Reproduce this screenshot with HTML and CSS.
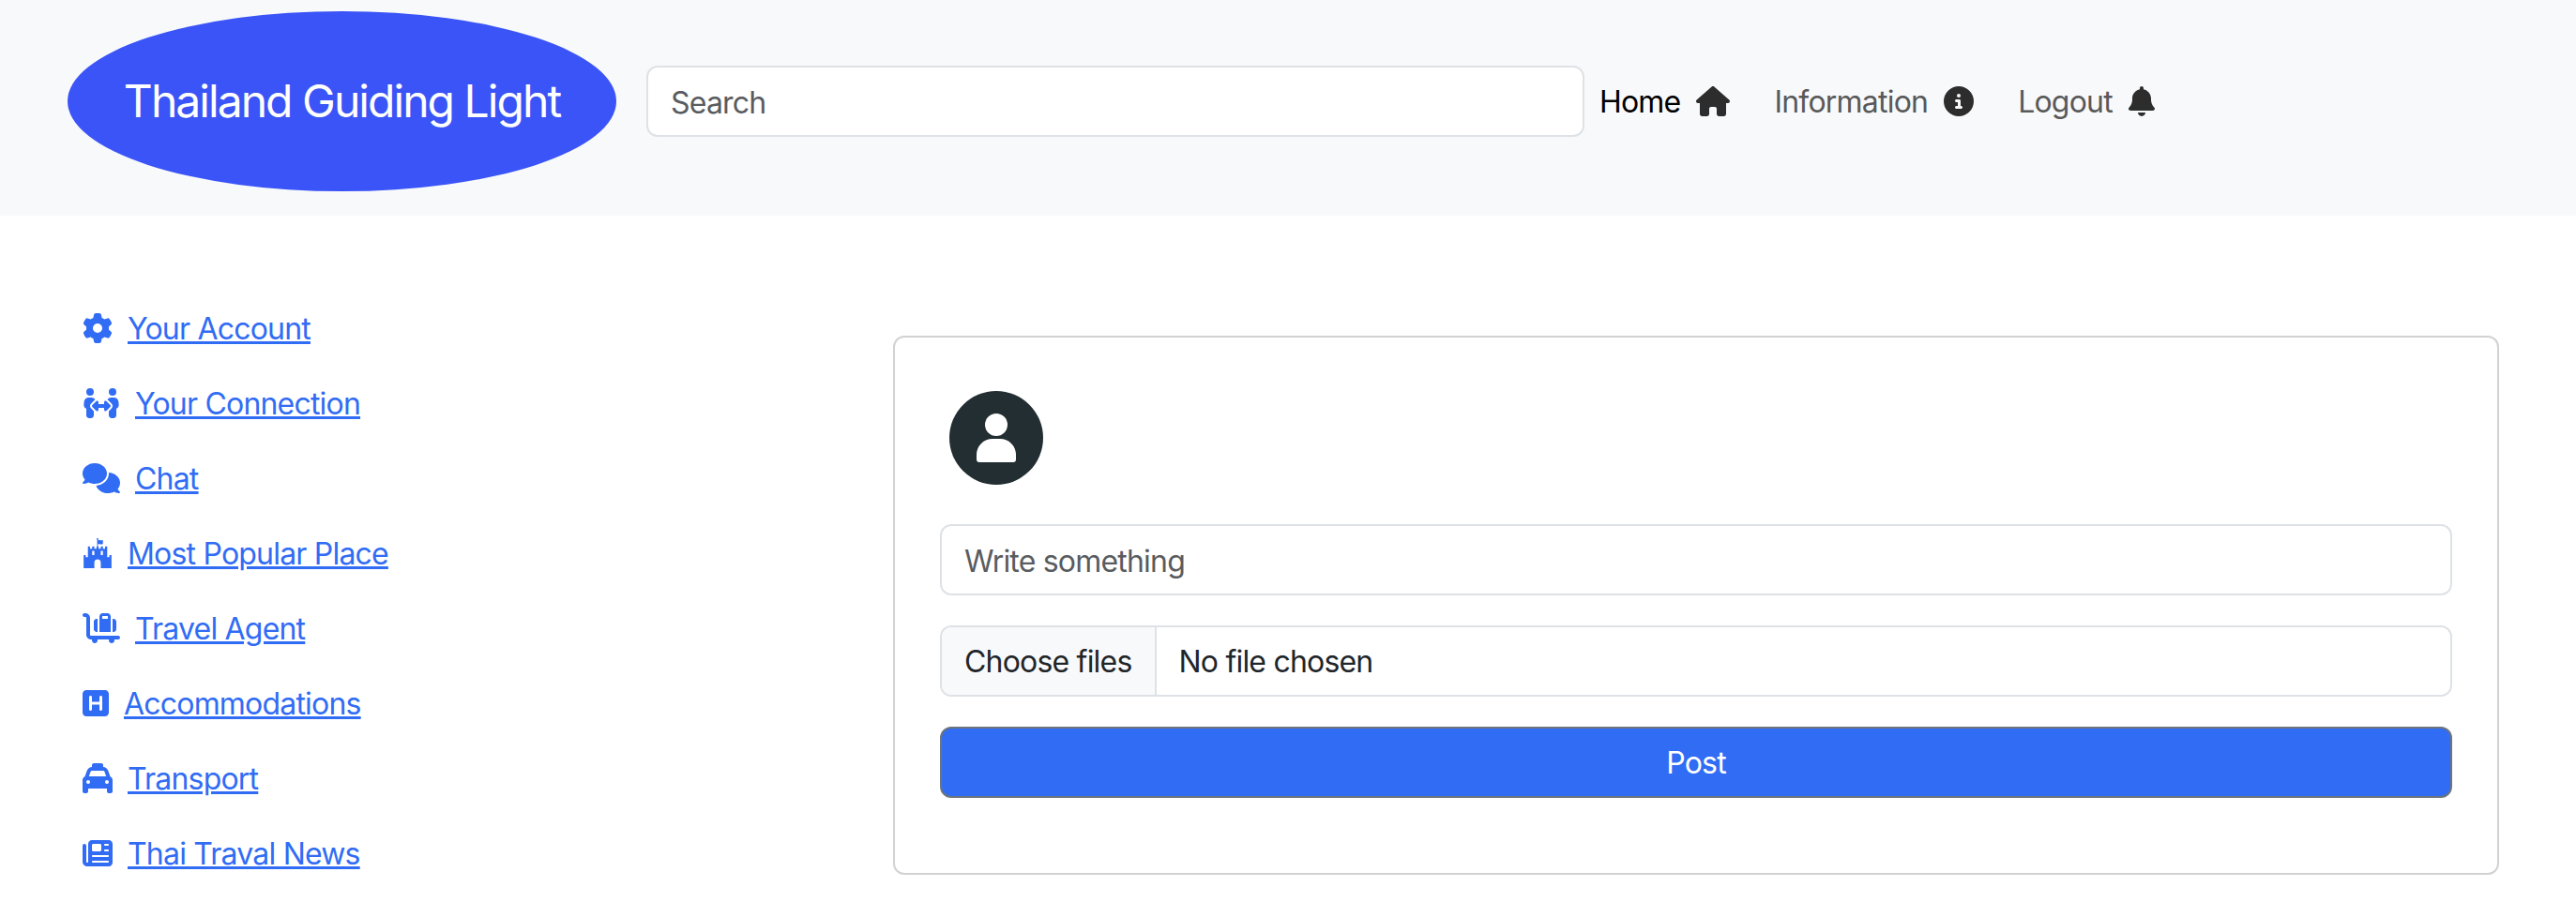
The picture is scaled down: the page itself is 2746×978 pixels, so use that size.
FILE: index.html
```html
<!DOCTYPE html>
<html lang="en">
<head>
<meta charset="utf-8">
<title>Thailand Guiding Light</title>
<link rel="stylesheet" href="styles.css">
</head>
<body>
<header class="navbar">
  <a class="brand" href="#">Thailand Guiding Light</a>
  <input class="field search" type="text" placeholder="Search">
  <nav class="nav-links">
    <a class="nav-link active" href="#"><span class="label">Home</span> <svg class="icon" viewBox="0 0 576 512"><path d="M575.8 255.5c0 18-15 32.1-32 32.1h-32l.7 160.2c0 2.7-.2 5.4-.5 8.1V472c0 22.1-17.9 40-40 40H456c-1.1 0-2.2 0-3.3-.1c-1.4 .1-2.8 .1-4.2 .1H416 392c-22.1 0-40-17.9-40-40V448 384c0-17.7-14.3-32-32-32H256c-17.7 0-32 14.3-32 32v64 24c0 22.1-17.9 40-40 40H160 128.1c-1.5 0-3-.1-4.5-.2c-1.2 .1-2.4 .2-3.6 .2H104c-22.1 0-40-17.9-40-40V360c0-.9 0-1.9 .1-2.8V287.6H32c-18 0-32-14-32-32.1c0-9 3-17 10-24L266.4 8c7-7 15-8 22-8s15 2 21 7L564.8 231.5c8 7 12 15 11 24z"/></svg></a>
    <a class="nav-link" href="#"><span class="label">Information</span> <svg class="icon" viewBox="0 0 512 512"><path d="M256 512A256 256 0 1 0 256 0a256 256 0 1 0 0 512zM216 336h24V272H216c-13.3 0-24-10.7-24-24s10.7-24 24-24h48c13.3 0 24 10.7 24 24v88h8c13.3 0 24 10.7 24 24s-10.7 24-24 24H216c-13.3 0-24-10.7-24-24s10.7-24 24-24zm40-208a32 32 0 1 1 0 64 32 32 0 1 1 0-64z"/></svg></a>
    <a class="nav-link" href="#"><span class="label">Logout</span> <svg class="icon" viewBox="0 0 448 512"><path d="M224 0c-17.7 0-32 14.3-32 32V51.2C119 66 64 130.6 64 208v18.8c0 47-17.3 92.4-48.5 127.6l-7.4 8.3c-8.4 9.4-10.4 22.9-5.3 34.4S19.4 416 32 416H416c12.6 0 24-7.4 29.2-18.9s3.1-25-5.3-34.4l-7.4-8.3C401.3 319.2 384 273.9 384 226.8V208c0-77.4-55-142-128-156.8V32c0-17.7-14.3-32-32-32zm45.3 493.3c12-12 18.7-28.3 18.7-45.3H224 160c0 17 6.7 33.3 18.7 45.3s28.3 18.7 45.3 18.7s33.3-6.7 45.3-18.7z"/></svg></a>
  </nav>
</header>
<main class="layout">
  <ul class="side">
    <li class="side-item"><svg class="icon" viewBox="0 0 512 512"><path d="M495.9 166.6c3.2 8.7 .5 18.4-6.4 24.6l-43.3 39.4c1.1 8.3 1.7 16.8 1.7 25.4s-.6 17.1-1.7 25.4l43.3 39.4c6.9 6.2 9.6 15.9 6.4 24.6c-4.4 11.9-9.7 23.3-15.8 34.3l-4.7 8.1c-6.6 11-14 21.4-22.1 31.2c-5.9 7.2-15.7 9.6-24.5 6.8l-55.7-17.7c-13.4 10.3-28.2 18.9-44 25.4l-12.5 57.1c-2 9.1-9 16.3-18.2 17.8c-13.8 2.3-28 3.5-42.5 3.5s-28.7-1.2-42.5-3.5c-9.2-1.5-16.2-8.7-18.2-17.8l-12.5-57.1c-15.8-6.5-30.6-15.1-44-25.4L83.1 425.9c-8.8 2.8-18.6 .3-24.5-6.8c-8.1-9.8-15.5-20.2-22.1-31.2l-4.7-8.1c-6.1-11-11.4-22.4-15.8-34.3c-3.2-8.7-.5-18.4 6.4-24.6l43.3-39.4C64.6 273.1 64 264.6 64 256s.6-17.1 1.7-25.4L22.4 191.2c-6.9-6.2-9.6-15.9-6.4-24.6c4.4-11.9 9.7-23.3 15.8-34.3l4.7-8.1c6.6-11 14-21.4 22.1-31.2c5.9-7.2 15.7-9.6 24.5-6.8l55.7 17.7c13.4-10.3 28.2-18.9 44-25.4l12.5-57.1c2-9.1 9-16.3 18.2-17.8C227.3 1.2 241.5 0 256 0s28.7 1.2 42.5 3.5c9.2 1.5 16.2 8.7 18.2 17.8l12.5 57.1c15.8 6.5 30.6 15.1 44 25.4l55.7-17.7c8.8-2.8 18.6-.3 24.5 6.8c8.1 9.8 15.5 20.2 22.1 31.2l4.7 8.1c6.1 11 11.4 22.4 15.8 34.3zM256 336a80 80 0 1 0 0-160 80 80 0 1 0 0 160z"/></svg><a href="#">Your Account</a></li>
    <li class="side-item"><svg class="icon" viewBox="0 0 640 512"><path d="M64 64a64 64 0 1 1 128 0A64 64 0 1 1 64 64zM25.9 233.4C29.3 191.9 64 160 105.6 160h44.8c27 0 51 13.4 65.5 34.1c-2.7 1.9-5.2 4-7.5 6.3l-64 64c-21.9 21.9-21.9 57.3 0 79.2L192 391.2V464c0 26.5-21.5 48-48 48H112c-26.5 0-48-21.5-48-48V348.3c-26.5-9.5-44.7-35.8-42.2-65.6l4.1-49.3zM448 64a64 64 0 1 1 128 0A64 64 0 1 1 448 64zM431.6 200.4c-2.3-2.3-4.9-4.4-7.5-6.3c14.5-20.7 38.6-34.1 65.5-34.1h44.8c41.6 0 76.3 31.9 79.7 73.4l4.1 49.3c2.5 29.8-15.7 56.1-42.2 65.6V464c0 26.5-21.5 48-48 48H496c-26.5 0-48-21.5-48-48V391.2l47.6-47.6c21.9-21.9 21.9-57.3 0-79.2l-64-64zM272 240v32h96V240c0-9.7 5.8-18.5 14.8-22.2s19.3-1.7 26.2 5.2l64 64c9.4 9.4 9.4 24.6 0 33.9l-64 64c-6.9 6.9-17.2 8.9-26.2 5.2s-14.8-12.5-14.8-22.2V336H272v32c0 9.7-5.8 18.5-14.8 22.2s-19.3 1.7-26.2-5.2l-64-64c-9.4-9.4-9.4-24.6 0-33.9l64-64c6.9-6.9 17.2-8.9 26.2-5.2s14.8 12.5 14.8 22.2z"/></svg><a href="#">Your Connection</a></li>
    <li class="side-item"><svg class="icon" viewBox="0 0 640 512"><path d="M208 352c114.9 0 208-78.8 208-176S322.9 0 208 0S0 78.8 0 176c0 38.6 14.7 74.3 39.6 103.4c-3.5 9.4-8.7 17.7-14.2 24.7c-4.8 6.2-9.7 11-13.3 14.3c-1.8 1.6-3.3 2.9-4.3 3.7c-.5 .4-.9 .7-1.1 .8l-.2 .2 0 0 0 0C1 327.2-1.4 334.4 .8 340.9S9.1 352 16 352c21.8 0 43.8-5.6 62.1-12.5c9.2-3.5 17.8-7.4 25.3-11.4C134.1 343.3 169.8 352 208 352zM448 176c0 112.3-99.1 196.9-216.5 207C255.8 457.4 336.4 512 432 512c38.2 0 73.9-8.7 104.7-23.9c7.5 4 16 7.9 25.2 11.4c18.3 6.9 40.3 12.5 62.1 12.5c6.9 0 13.1-4.5 15.2-11.1c2.1-6.6-.2-13.8-5.8-17.9l0 0 0 0-.2-.2c-.2-.2-.6-.4-1.1-.8c-1-.8-2.5-2-4.3-3.7c-3.6-3.3-8.5-8.1-13.3-14.3c-5.5-7-10.7-15.4-14.2-24.7c24.9-29 39.6-64.7 39.6-103.4c0-92.8-84.9-168.9-192.6-175.5c.4 5.1 .6 10.3 .6 15.5z"/></svg><a href="#">Chat</a></li>
    <li class="side-item"><svg class="icon" viewBox="0 0 512 512"><path d="M489.2 287.9h-27.4c-2.6 0-4.6 2-4.6 4.6v32h-36.6V146.2c0-2.6-2-4.6-4.6-4.6h-27.4c-2.6 0-4.6 2-4.6 4.6v32h-36.6v-32c0-2.6-2-4.6-4.6-4.6h-27.4c-2.6 0-4.6 2-4.6 4.6v32h-36.6v-32c0-6-8-4.6-11.7-4.6v-38c8.3-2 17.1-3.4 25.7-3.4 10.9 0 20.9 4.3 31.4 4.3 4.6 0 27.7-1.1 27.7-8v-60c0-2.6-2-4.6-4.6-4.6-5.1 0-15.1 4.3-24 4.3-9.7 0-20.9-4.3-32.6-4.3-8 0-16 1.1-23.7 2.9v-4.9c5.4-2.6 9.1-8.3 9.1-14.3 0-20.7-31.4-20.8-31.4 0 0 6 3.7 11.7 9.1 14.3v111.7c-3.7 0-11.7-1.4-11.7 4.6v32h-36.6v-32c0-2.6-2-4.6-4.6-4.6h-27.4c-2.6 0-4.6 2-4.6 4.6v32H128v-32c0-2.6-2-4.6-4.6-4.6H96c-2.6 0-4.6 2-4.6 4.6v178.3H54.8v-32c0-2.6-2-4.6-4.6-4.6H22.8c-2.6 0-4.6 2-4.6 4.6V512h182.9v-96c0-72.6 109.7-72.6 109.7 0v96h182.9V292.5c.1-2.6-1.9-4.6-4.5-4.6zm-288.1-4.5c0 2.6-2 4.6-4.6 4.6h-27.4c-2.6 0-4.6-2-4.6-4.6v-64c0-2.6 2-4.6 4.6-4.6h27.4c2.6 0 4.6 2 4.6 4.6v64zm146.4 0c0 2.6-2 4.6-4.6 4.6h-27.4c-2.6 0-4.6-2-4.6-4.6v-64c0-2.6 2-4.6 4.6-4.6h27.4c2.6 0 4.6 2 4.6 4.6v64z"/></svg><a href="#">Most Popular Place</a></li>
    <li class="side-item"><svg class="icon" viewBox="0 0 640 512"><path d="M0 32C0 14.3 14.3 0 32 0H48c44.2 0 80 35.8 80 80V368c0 8.8 7.2 16 16 16H608c17.7 0 32 14.3 32 32s-14.3 32-32 32H541.3c1.8 5 2.7 10.4 2.7 16c0 26.5-21.5 48-48 48s-48-21.5-48-48c0-5.6 1-11 2.7-16H253.3c1.8 5 2.7 10.4 2.7 16c0 26.5-21.5 48-48 48s-48-21.5-48-48c0-5.6 1-11 2.7-16H144c-44.2 0-80-35.8-80-80V80c0-8.8-7.2-16-16-16H32C14.3 64 0 49.7 0 32zM432 96V56c0-4.4-3.6-8-8-8H344c-4.4 0-8 3.6-8 8V96h96zM288 96V56c0-30.9 25.1-56 56-56h80c30.9 0 56 25.1 56 56V96 320H288V96zM512 320V96h16c26.5 0 48 21.5 48 48V272c0 26.5-21.5 48-48 48H512zM240 96h16V320H240c-26.5 0-48-21.5-48-48V144c0-26.5 21.5-48 48-48z"/></svg><a href="#">Travel Agent</a></li>
    <li class="side-item"><svg class="icon" viewBox="0 0 448 512"><path d="M64 32C28.7 32 0 60.7 0 96V416c0 35.3 28.7 64 64 64H384c35.3 0 64-28.7 64-64V96c0-35.3-28.7-64-64-64H64zM336 152V256 360c0 13.3-10.7 24-24 24s-24-10.7-24-24V280H160l0 80c0 13.3-10.7 24-24 24s-24-10.7-24-24l0-208c0-13.3 10.7-24 24-24s24 10.7 24 24v80H288V152c0-13.3 10.7-24 24-24s24 10.7 24 24z"/></svg><a href="#">Accommodations</a></li>
    <li class="side-item"><svg class="icon" viewBox="0 0 512 512"><path d="M192 0c-17.7 0-32 14.3-32 32V64c0 .1 0 .1 0 .2c-38.6 2.2-72.3 27.3-85.2 64.1L39.6 228.8C16.4 238.4 0 261.3 0 288V432v48c0 17.7 14.3 32 32 32H64c17.7 0 32-14.3 32-32V432H416v48c0 17.7 14.3 32 32 32h32c17.7 0 32-14.3 32-32V432 288c0-26.7-16.4-49.6-39.6-59.2L437.2 128.3c-12.9-36.8-46.6-61.9-85.2-64.1c0-.1 0-.1 0-.2V32c0-17.7-14.3-32-32-32H192zM165.4 128H346.6c13.6 0 25.7 8.6 30.2 21.4L402.9 224H109.1l26.1-74.6c4.5-12.8 16.6-21.4 30.2-21.4zM96 288a32 32 0 1 1 0 64 32 32 0 1 1 0-64zm288 32a32 32 0 1 1 64 0 32 32 0 1 1 -64 0z"/></svg><a href="#">Transport</a></li>
    <li class="side-item"><svg class="icon" viewBox="0 0 512 512"><path d="M96 96c0-35.3 28.7-64 64-64H448c35.3 0 64 28.7 64 64V416c0 35.3-28.7 64-64 64H80c-44.2 0-80-35.8-80-80V128c0-17.7 14.3-32 32-32s32 14.3 32 32V400c0 8.8 7.2 16 16 16s16-7.2 16-16V96zm64 24v80c0 13.3 10.7 24 24 24H296c13.3 0 24-10.7 24-24V120c0-13.3-10.7-24-24-24H184c-13.3 0-24 10.7-24 24zm208-8c0 8.8 7.2 16 16 16h48c8.8 0 16-7.2 16-16s-7.2-16-16-16H384c-8.8 0-16 7.2-16 16zm0 96c0 8.8 7.2 16 16 16h48c8.8 0 16-7.2 16-16s-7.2-16-16-16H384c-8.8 0-16 7.2-16 16zM160 304c0 8.8 7.2 16 16 16H432c8.8 0 16-7.2 16-16s-7.2-16-16-16H176c-8.8 0-16 7.2-16 16zm0 96c0 8.8 7.2 16 16 16H432c8.8 0 16-7.2 16-16s-7.2-16-16-16H176c-8.8 0-16 7.2-16 16z"/></svg><a href="#">Thai Traval News</a></li>
  </ul>
  <section class="card">
    <div class="avatar"><svg class="avatar-icon" viewBox="0 0 42 52"><circle cx="21" cy="12" r="12"/><path d="M3 52a3 3 0 0 1-3-3v-5a17 17 0 0 1 17-17h8a17 17 0 0 1 17 17v5a3 3 0 0 1-3 3z"/></svg></div>
    <form class="post-form">
      <input class="field" type="text" placeholder="Write something">
      <div class="file-field"><span class="file-btn">Choose files</span><span class="file-name">No file chosen</span></div>
      <button class="post-btn" type="button">Post</button>
    </form>
  </section>
</main>
</body>
</html>
```
FILE: styles.css
```css
* { box-sizing: border-box; }
html, body { margin: 0; }
body {
  font-family: Inter, "Liberation Sans", sans-serif;
  font-size: 32px;
  line-height: 48px;
  letter-spacing: -0.8px;
  color: #212529;
  background: #fff;
}
.navbar {
  display: flex;
  align-items: center;
  height: 230px;
  padding: 12px 0 26px 72px;
  background: #f8f9fb;
}
.brand {
  display: flex;
  align-items: center;
  justify-content: center;
  flex: none;
  width: 585px;
  height: 192px;
  margin-right: 32px;
  border-radius: 50%;
  background: #3a54f7;
  color: #fff;
  font-size: 48px;
  letter-spacing: -1.95px;
  text-decoration: none;
}
.field {
  display: block;
  width: 100%;
  height: 76px;
  padding: 2px 24px 0;
  border: 2px solid #dee2e6;
  border-radius: 12px;
  background: #fff;
  color: #212529;
  font: inherit;
  letter-spacing: inherit;
  outline: none;
}
.field::placeholder { color: #595c5f; opacity: 1; }
.search { width: 1000px; flex: none; margin-right: 16px; }
.nav-links { display: flex; gap: 47px; }
.nav-link {
  display: flex;
  align-items: center;
  gap: 17px;
  color: #595959;
  text-decoration: none;
  white-space: nowrap;
}
.nav-link.active { color: #000; }
.label { padding-top: 2px; }
.icon { height: 32px; width: auto; flex: none; fill: currentColor; }
.nav-link .icon { fill: #2d2d2d; }
.layout {
  display: flex;
  align-items: flex-start;
  padding: 0 82px 0 88px;
}
.side {
  flex: none;
  width: 864px;
  margin: 80px 0 0;
  padding: 0;
  list-style: none;
}
.side-item {
  display: flex;
  align-items: center;
  gap: 16px;
  height: 80px;
  color: #316cf4;
}
.side-item a { padding-top: 2px; color: inherit; text-decoration: underline; }
.card {
  flex: 1;
  margin-top: 128px;
  padding: 57px 48px 80px;
  border: 2px solid #d2d2d2;
  border-radius: 12px;
}
.avatar {
  display: flex;
  align-items: center;
  justify-content: center;
  width: 100px;
  height: 100px;
  margin: 0 0 42px 10px;
  border-radius: 50%;
  background: #222e32;
}
.avatar-icon { width: 42px; height: 52px; fill: #fff; }
.post-form { display: flex; flex-direction: column; gap: 32px; }
.file-field {
  display: flex;
  align-items: center;
  height: 76px;
  border: 2px solid #dee2e6;
  border-radius: 12px;
  overflow: hidden;
}
.file-btn {
  display: flex;
  align-items: center;
  height: 100%;
  padding: 2px 24px 0;
  background: #f8f9fb;
  border-right: 2px solid #dee2e6;
}
.file-name { padding: 2px 0 0 24px; }
.post-btn {
  height: 76px;
  padding-top: 2px;
  border: 2px solid #6c757d;
  border-radius: 12px;
  background: #316cf4;
  color: #fff;
  font: inherit;
  letter-spacing: inherit;
}
```
